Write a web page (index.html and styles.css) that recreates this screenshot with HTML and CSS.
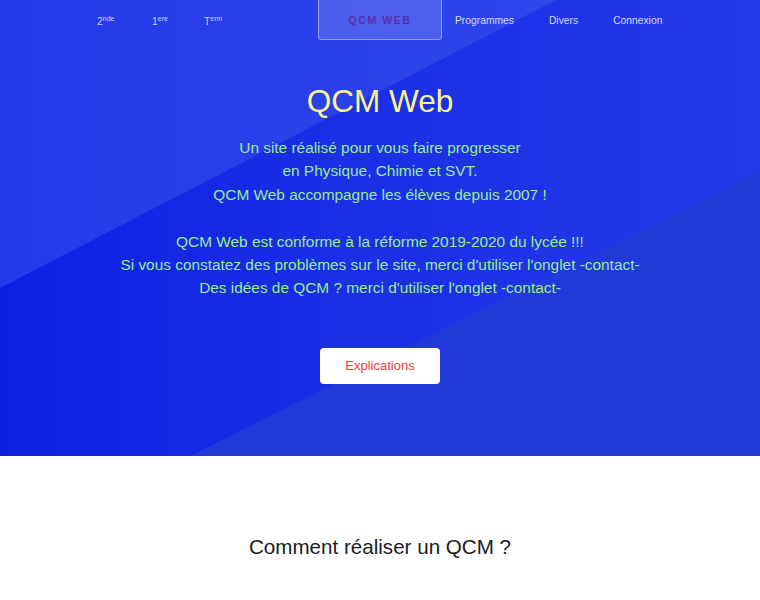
FILE: index.html
```html
<!DOCTYPE html>
<html lang="fr">
<head>
<meta charset="utf-8">
<title>QCM Web</title>
<link rel="stylesheet" href="styles.css">
</head>
<body>
<header class="hero">
  <nav class="nav">
    <div class="nav-levels">
      <a class="lvl lvl-2">2<sup>nde</sup></a>
      <a class="lvl lvl-1">1<sup>ere</sup></a>
      <a class="lvl lvl-t">T<sup>erm</sup></a>
    </div>
    <div class="nav-main">
      <a class="brand">QCM WEB</a>
      <a class="link">Programmes</a>
      <a class="link">Divers</a>
      <a class="link">Connexion</a>
    </div>
  </nav>
  <div class="hero-body">
    <h1 class="title">QCM Web</h1>
    <p class="lead">Un site réalisé pour vous faire progresser<br>en Physique, Chimie et SVT.<br>QCM Web accompagne les élèves depuis 2007 !<br><br>QCM Web est conforme à la réforme 2019-2020 du lycée !!!<br>Si vous constatez des problèmes sur le site, merci d'utiliser l'onglet -contact-<br>Des idées de QCM ? merci d'utiliser l'onglet -contact-</p>
    <a class="btn">Explications</a>
  </div>
</header>
<section class="howto">
  <h2 class="howto-title">Comment réaliser un QCM ?</h2>
</section>
</body>
</html>
```
FILE: styles.css
```css
html, body {
  margin: 0;
  padding: 0;
}
body {
  font-family: "Liberation Sans", Arial, sans-serif;
  background: #ffffff;
  overflow: hidden;
}
a {
  text-decoration: none;
  cursor: pointer;
}
.hero {
  position: relative;
  height: 456px;
  overflow: hidden;
  background: linear-gradient(90deg, #0e1fe1 0%, #1a2fe6 45%, #2438e8 100%);
}
.hero::before {
  content: "";
  position: absolute;
  inset: 0;
  background: linear-gradient(90deg, #2439e9 0%, #2d43ea 60%, #364cec 100%);
  clip-path: polygon(0 0, 556px 0, 0 288px);
}
.hero::after {
  content: "";
  position: absolute;
  inset: 0;
  background: #2239da;
  clip-path: polygon(760px 170px, 760px 456px, 190px 456px);
}
.nav {
  position: relative;
  z-index: 1;
  display: flex;
  height: 40px;
  padding-left: 97px;
}
.nav-levels {
  display: flex;
  align-items: flex-start;
  padding-top: 13px;
}
.lvl {
  color: rgba(228, 232, 255, 0.88);
  font-size: 10.3px;
  line-height: 12px;
}
.lvl sup {
  font-size: 7px;
  vertical-align: 4px;
}
.lvl-2 { width: 55px; }
.lvl-1 { width: 52px; }
.lvl-t { width: 40px; }
.nav-main {
  display: flex;
  align-items: center;
  margin-left: 74px;
}
.brand {
  box-sizing: border-box;
  width: 124px;
  height: 41px;
  margin-top: -1px;
  display: flex;
  align-items: center;
  justify-content: center;
  padding-top: 1px;
  background: rgba(255, 255, 255, 0.16);
  border: 1px solid rgba(200, 210, 255, 0.55);
  border-radius: 0 0 3px 3px;
  color: #5630ad;
  font-weight: bold;
  font-size: 10.5px;
  letter-spacing: 1.6px;
}
.link {
  color: rgba(228, 232, 255, 0.92);
  font-size: 10.3px;
  padding: 0 17.5px;
}
.brand + .link { padding-left: 13px; }
.hero-body {
  position: relative;
  z-index: 1;
  display: flex;
  flex-direction: column;
  align-items: center;
  text-align: center;
}
.title {
  margin: 43px 0 0;
  font-weight: normal;
  font-size: 31.5px;
  line-height: 36px;
  color: #fbf38d;
}
.lead {
  margin: 17px 0 0;
  font-size: 15.4px;
  line-height: 23.4px;
  color: #9bea8e;
}
.btn {
  margin-top: 48px;
  width: 120px;
  height: 36px;
  box-sizing: border-box;
  display: flex;
  align-items: center;
  justify-content: center;
  background: #ffffff;
  border-radius: 4px;
  color: #e5433d;
  font-size: 13px;
}
.howto {
  height: 144px;
  box-sizing: border-box;
  padding-top: 79px;
  text-align: center;
}
.howto-title {
  margin: 0;
  font-weight: normal;
  font-size: 20.6px;
  line-height: 23px;
  color: #1a1c1f;
}
```
